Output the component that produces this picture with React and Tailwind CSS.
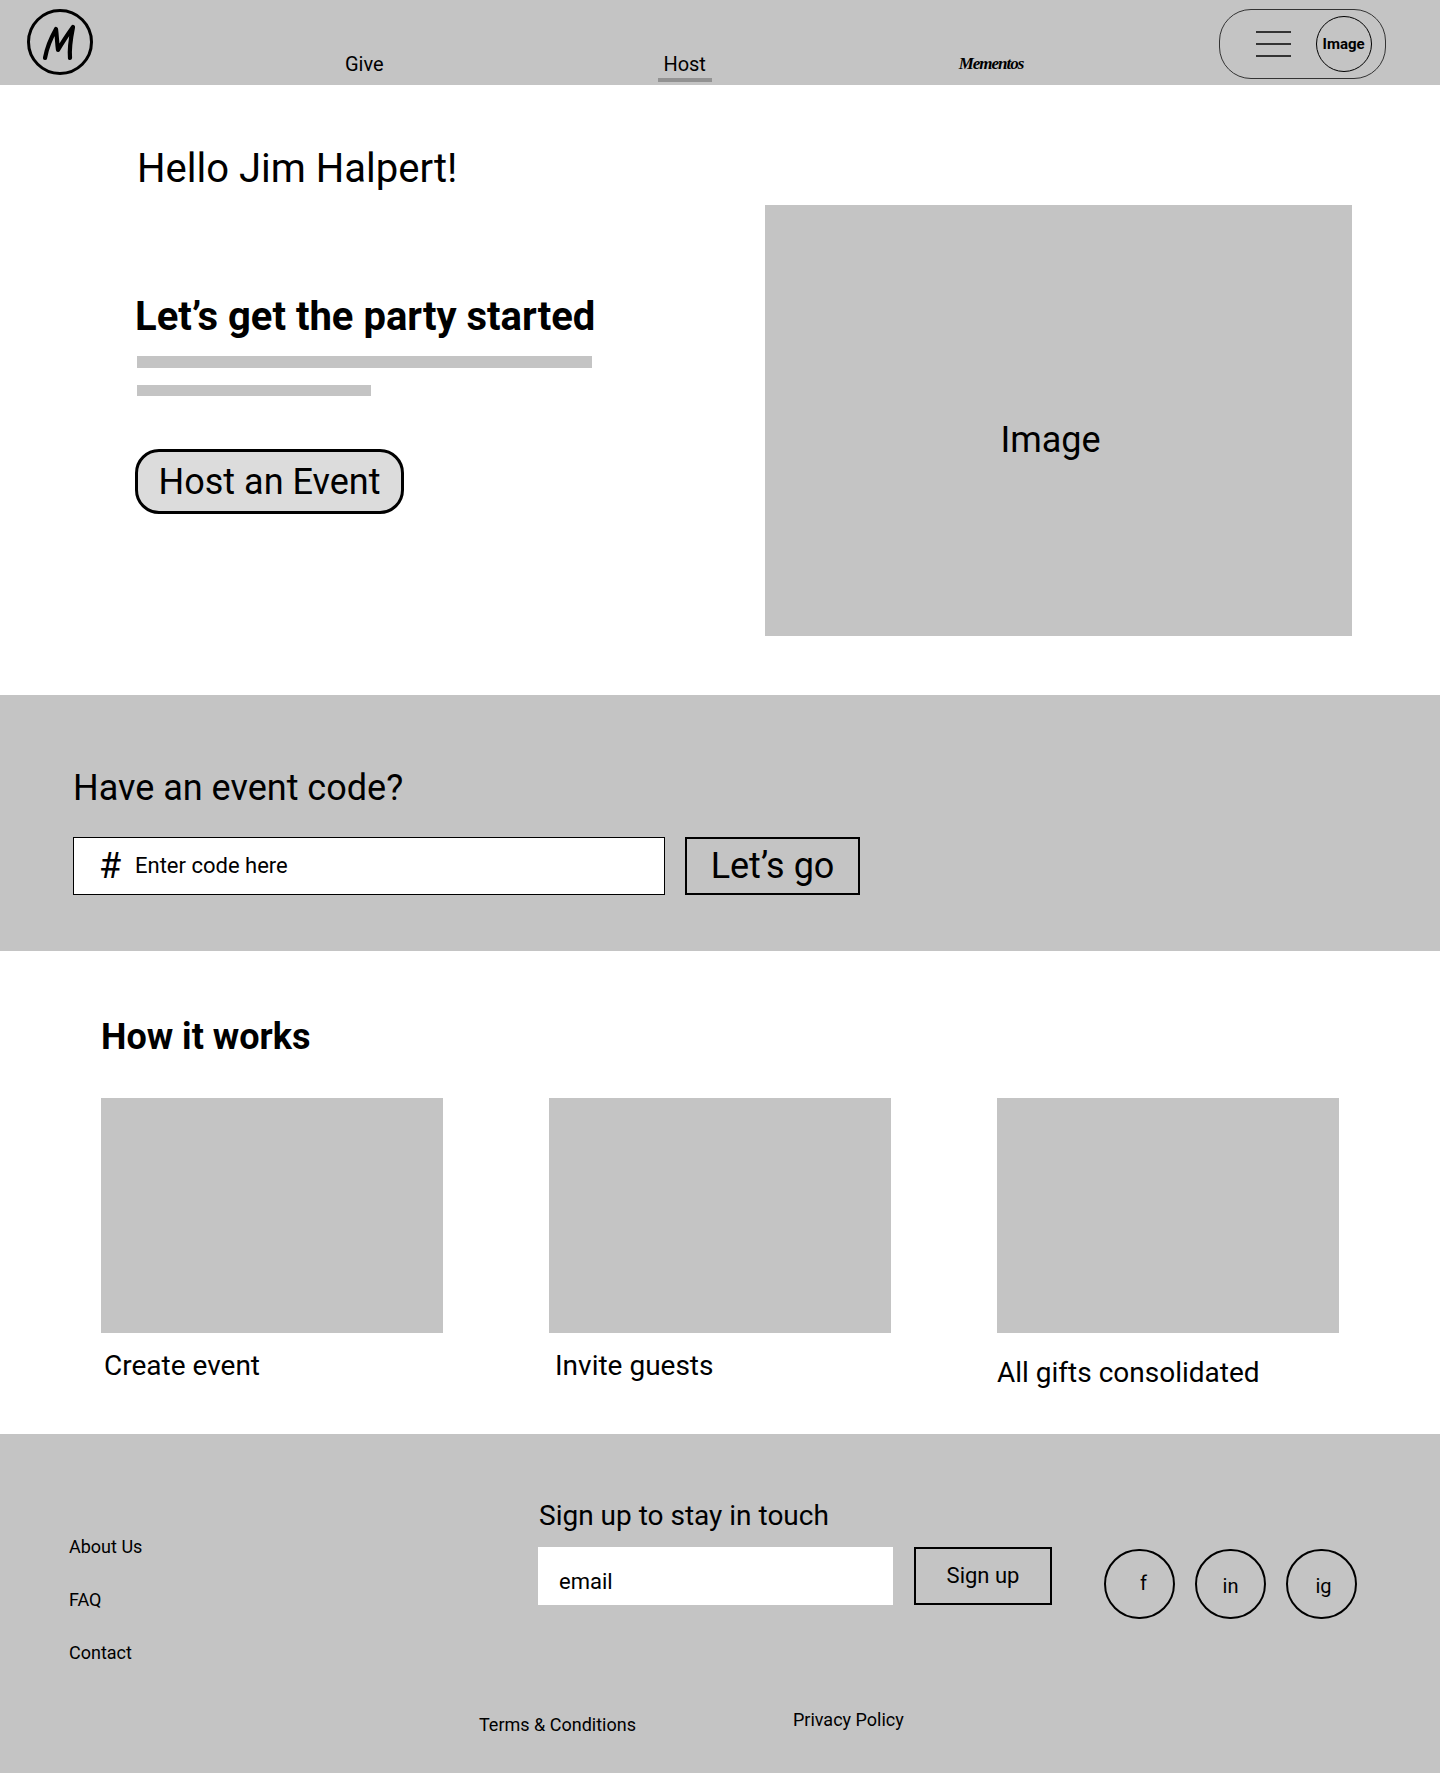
const Circle = ({ label, className }) => (
  <div className={`flex h-[70px] w-[71px] items-center justify-center rounded-full border-2 border-black text-[20px] ${className}`}>
    {label}
  </div>
);

const Step = ({ title, captionClass }) => (
  <div className="w-[342px] shrink-0">
    <div className="h-[235px] bg-[#c4c4c4]"></div>
    <p className={`text-[28px] leading-[33px] ${captionClass}`}>{title}</p>
  </div>
);

const Logo = () => (
  <svg width="66" height="66" viewBox="0 0 66 66" fill="none" className="mt-[9px] shrink-0">
    <circle cx="33" cy="33" r="31.5" stroke="black" strokeWidth="3" />
    <path
      d="M18 49 C20 38 25 27 29 20 C30 28 30 34 31 41 C35 34 41 25 46 18 C44 28 42 38 43 49"
      stroke="black"
      strokeWidth="4.2"
      strokeLinecap="round"
      strokeLinejoin="round"
    />
  </svg>
);

export default function App() {
  return (
    <div className="w-[1440px] overflow-hidden bg-white font-['Roboto',sans-serif] text-black">
      <header className="flex h-[85px] items-start bg-[#c4c4c4] pl-[27px]">
        <Logo />
        <span className="ml-[252px] mt-[52px] text-[20px] leading-[24px]">Give</span>
        <div className="ml-[274px] mt-[52px] flex flex-col items-center">
          <span className="text-[20px] leading-[24px]">Host</span>
          <div className="mt-[2px] h-[4px] w-[54px] bg-[#929292]"></div>
        </div>
        <span className="ml-[247px] mt-[52px] w-[66px] whitespace-nowrap font-['Liberation_Serif',serif] text-[17px] font-bold italic leading-[24px] tracking-[-1px]">
          Mementos
        </span>
        <div className="ml-[194px] mt-[9px] flex h-[70px] w-[167px] items-center rounded-[32px] border border-[#333] pl-[36px]">
          <div className="flex w-[35px] flex-col gap-[10px]">
            <div className="h-[2px] bg-[#333]"></div>
            <div className="h-[2px] bg-[#333]"></div>
            <div className="h-[2px] bg-[#333]"></div>
          </div>
          <div className="ml-[25px] flex h-[56px] w-[56px] items-center justify-center rounded-full border border-black text-[15px] font-bold">
            Image
          </div>
        </div>
      </header>

      <section className="flex h-[610px] pl-[135px]">
        <div className="w-[630px] shrink-0">
          <h1 className="ml-[2px] mt-[60px] text-[40px] font-normal leading-[47px]">Hello Jim Halpert!</h1>
          <h2 className="mt-[101px] text-[40px] font-bold leading-[47px]">Let’s get the party started</h2>
          <div className="ml-[2px] mt-[16px] h-[12px] w-[455px] bg-[#c4c4c4]"></div>
          <div className="ml-[2px] mt-[17px] h-[11px] w-[234px] bg-[#c4c4c4]"></div>
          <button className="mt-[53px] flex h-[65px] w-[269px] items-center justify-center rounded-[24px] border-[3px] border-black bg-[#dcdcdc] text-[36px] leading-[42px]">
            Host an Event
          </button>
        </div>
        <div className="mt-[120px] flex h-[431px] w-[587px] items-center justify-center bg-[#c4c4c4] pr-[16px] pt-[38px] text-[36px]">
          Image
        </div>
      </section>

      <section className="h-[256px] bg-[#c4c4c4] pl-[73px] pt-[72px]">
        <h2 className="text-[36px] font-normal leading-[42px]">Have an event code?</h2>
        <div className="mt-[28px] flex gap-[20px]">
          <div className="flex h-[58px] w-[592px] items-center border border-black bg-white pl-[25px]">
            <span className="w-[36px] text-[36px] leading-[42px]">#</span>
            <span className="pb-[2px] text-[22px]">Enter code here</span>
          </div>
          <button className="h-[58px] w-[175px] border-2 border-black text-[36px] leading-[42px]">Let’s go</button>
        </div>
      </section>

      <section className="h-[483px] pl-[101px] pt-[65px]">
        <h2 className="text-[36px] font-bold leading-[42px]">How it works</h2>
        <div className="mt-[40px] flex gap-[106px]">
          <Step title="Create event" captionClass="ml-[3px] mt-[16px]" />
          <Step title="Invite guests" captionClass="ml-[6px] mt-[16px]" />
          <Step title="All gifts consolidated" captionClass="mt-[23px]" />
        </div>
      </section>

      <footer className="h-[339px] bg-[#c4c4c4]">
        <div className="flex">
          <div className="ml-[69px] mt-[102px] flex w-[469px] shrink-0 flex-col gap-[32px] text-[18px] leading-[21px]">
            <span>About Us</span>
            <span>FAQ</span>
            <span>Contact</span>
          </div>
          <div className="mt-[65px] w-[566px] shrink-0">
            <h3 className="ml-[1px] text-[28px] font-normal leading-[33px]">Sign up to stay in touch</h3>
            <div className="mt-[15px] flex gap-[21px]">
              <div className="flex h-[58px] w-[355px] items-end bg-white pb-[9px] pl-[21px] text-[22px] leading-[28px]">email</div>
              <button className="h-[58px] w-[138px] border-2 border-black pb-[2px] text-[22px]">Sign up</button>
            </div>
          </div>
          <div className="mt-[115px] flex gap-[20px]">
            <Circle label="f" className="pb-[2px] pl-[8px]" />
            <Circle label="in" className="pt-[4px]" />
            <Circle label="ig" className="pl-[4px] pt-[4px]" />
          </div>
        </div>
        <div className="flex text-[18px] leading-[21px]">
          <span className="ml-[479px] mt-[51px]">Terms &amp; Conditions</span>
          <span className="ml-[157px] mt-[46px]">Privacy Policy</span>
        </div>
      </footer>
    </div>
  );
}
